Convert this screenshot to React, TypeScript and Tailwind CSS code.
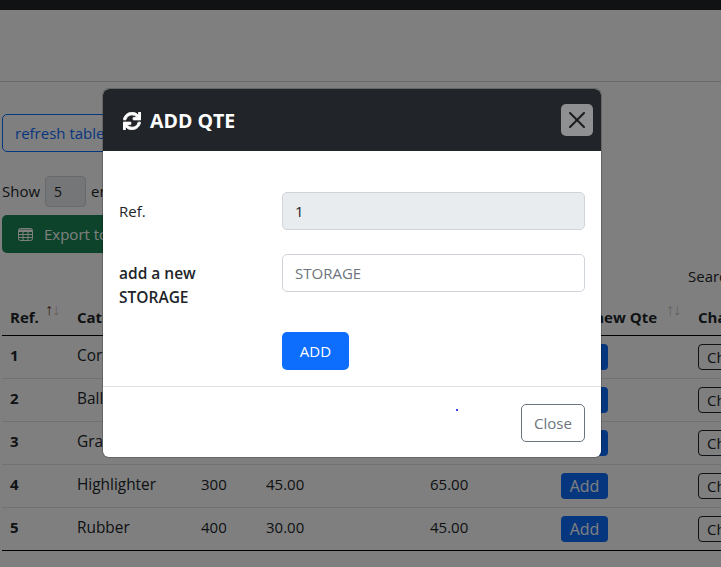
import { FaSync } from "react-icons/fa";

const rows = [
  { ref: 1, name: "Correcteur", qte: "100", price: "15.00", next: "25.00" },
  { ref: 2, name: "Ball pen", qte: "150", price: "20.00", next: "30.00" },
  { ref: 3, name: "Graphite", qte: "200", price: "25.00", next: "40.00" },
  { ref: 4, name: "Highlighter", qte: "300", price: "45.00", next: "65.00" },
  { ref: 5, name: "Rubber", qte: "400", price: "30.00", next: "45.00" },
];

function SortArrows({ active }: { active?: boolean }) {
  return (
    <span className="absolute right-[10px] top-[0px] text-[16px] leading-[20px] font-normal tracking-[-1px]">
      <span className={active ? "text-[#6e3b12]" : "text-[#c4c4c4]"}>↑</span>
      <span className="text-[#c4c4c4]">↓</span>
    </span>
  );
}

function HeaderCell({ label, width, active }: { label: string; width: string; active?: boolean }) {
  return (
    <th className={`relative ${width} h-[36px] border-b border-black px-2 text-left font-bold whitespace-nowrap`}>
      {label}
      <SortArrows active={active} />
    </th>
  );
}

export default function App() {
  return (
    <div className="relative h-[567px] w-[721px] overflow-hidden bg-white text-[15px] leading-[24px] text-[#212529] font-['Open_Sans',sans-serif]">
      <div className="h-[10px] bg-[#212529]" />
      <div className="mt-[71px] border-t border-[#d3d3d3]" />

      <div className="pl-[2px]">
        <button className="mt-[32px] block h-[38px] w-[140px] rounded-[5px] border border-[#0d6efd] px-3 text-left text-[#0d6efd]">
          refresh table
        </button>

        <div className="mt-[24px] flex h-[31px] items-center gap-[5px]">
          <span className="pb-[2px]">Show</span>
          <span className="flex h-[31px] w-[41px] items-center rounded-[4px] border border-[#ced4da] bg-[#e9ecef] pl-2 text-[14px]">5</span>
          <span className="pb-[2px]">entries</span>
        </div>

        <button className="mt-[8px] flex h-[38px] w-[170px] items-center gap-[11px] rounded-[5px] bg-[#198754] px-4 text-white">
          <svg viewBox="0 0 15 13" className="h-[13px] w-[15px] fill-none stroke-white">
            <path d="M.5 2.5a2 2 0 012-2h10a2 2 0 012 2v8a2 2 0 01-2 2h-10a2 2 0 01-2-2z" />
            <path d="M.5 3.5h14M.5 6.5h14M.5 9.5h14M5 3.5v9M10 3.5v9" />
            <path d="M1 1.5h13v2H1z" className="fill-white stroke-none" />
          </svg>
          Export to Excel
        </button>

        <div className="mt-[11px] h-[24px] pl-[686px] whitespace-nowrap">Search:</div>

        <table className="mt-[11px] w-[860px] table-fixed border-b border-black">
          <thead>
            <tr>
              <HeaderCell label="Ref." width="w-[67px]" active />
              <HeaderCell label="Category" width="w-[124px]" />
              <HeaderCell label="Qte" width="w-[65px]" />
              <HeaderCell label="Price" width="w-[164px]" />
              <HeaderCell label="New Price" width="w-[131px]" />
              <HeaderCell label="Add new Qte" width="w-[137px]" />
              <HeaderCell label="Change" width="w-[172px]" />
            </tr>
          </thead>
          <tbody>
            {rows.map((row, index) => (
              <tr key={row.ref} className={index < rows.length - 1 ? "h-[43px] border-b border-[#dee2e6]" : "h-[43px]"}>
                <td className="px-2 pb-[4px] font-bold">{row.ref}</td>
                <td className="px-2 pb-[2px] text-[15.4px]">{row.name}</td>
                <td className="px-2 pb-[4px]">{row.qte}</td>
                <td className="px-2 pb-[4px]">{row.price}</td>
                <td className="px-2 pb-[4px]">{row.next}</td>
                <td className="px-2">
                  <button className="h-[26px] w-[47px] rounded-[4px] bg-[#0d6efd] text-center text-[16px] text-white">Add</button>
                </td>
                <td className="px-2">
                  <button className="h-[26px] w-[64px] rounded-[4px] border border-[#212529] px-2 text-left text-[15px] whitespace-nowrap">Change</button>
                </td>
              </tr>
            ))}
          </tbody>
        </table>
      </div>

      <div className="absolute inset-0 bg-black/50" />

      <div className="absolute top-[89px] left-[103px] w-[498px] overflow-hidden rounded-[6px] bg-white shadow-[0_0_0_1px_rgba(0,0,0,0.2)]">
        <div className="flex h-[62px] items-center justify-between bg-[#212529] pr-[8px] pl-[20px] text-white">
          <h5 className="flex items-center gap-[9px] pt-[1px] text-[19.5px] font-bold">
            <FaSync className="h-[18px] w-[18px] stroke-white stroke-[24]" />
            ADD QTE
          </h5>
          <button className="flex h-[32px] w-[32px] items-center justify-center rounded-[5px] bg-[#8f9092]">
            <svg viewBox="0 0 16 16" className="h-[16px] w-[16px] fill-[#1c1d1f]">
              <path d="M.293.293a1 1 0 011.414 0L8 6.586 14.293.293a1 1 0 111.414 1.414L9.414 8l6.293 6.293a1 1 0 01-1.414 1.414L8 9.414l-6.293 6.293a1 1 0 01-1.414-1.414L6.586 8 .293 1.707a1 1 0 010-1.414z" />
            </svg>
          </button>
        </div>

        <div className="px-4 pt-[41px] pb-4">
          <div className="grid grid-cols-[163px_303px] items-center">
            <span className="pb-[1px]">Ref.</span>
            <div className="flex h-[38px] items-center rounded-[5px] border border-[#ced4da] bg-[#e9ecef] px-3">1</div>
          </div>
          <div className="mt-[24px] grid h-[38px] grid-cols-[163px_303px] items-start">
            <span className="pt-[7px] text-[15.5px] font-semibold">add a new<br />STORAGE</span>
            <input placeholder="STORAGE" className="h-[38px] rounded-[5px] border border-[#ced4da] px-3 outline-none placeholder:text-[#6c757d]" />
          </div>
          <button className="mt-[40px] ml-[163px] h-[38px] w-[67px] rounded-[5px] bg-[#0d6efd] text-white">ADD</button>
        </div>

        <div className="relative flex h-[71px] items-start justify-end border-t border-[#dee2e6] px-4 pt-[17px]">
          <span className="absolute top-[22px] left-[353px] h-[2px] w-[2px] rounded-full bg-[#0000ee]" />
          <button className="h-[38px] w-[64px] rounded-[5px] border border-[#6c757d] text-[#6c757d]">Close</button>
        </div>
      </div>
    </div>
  );
}
